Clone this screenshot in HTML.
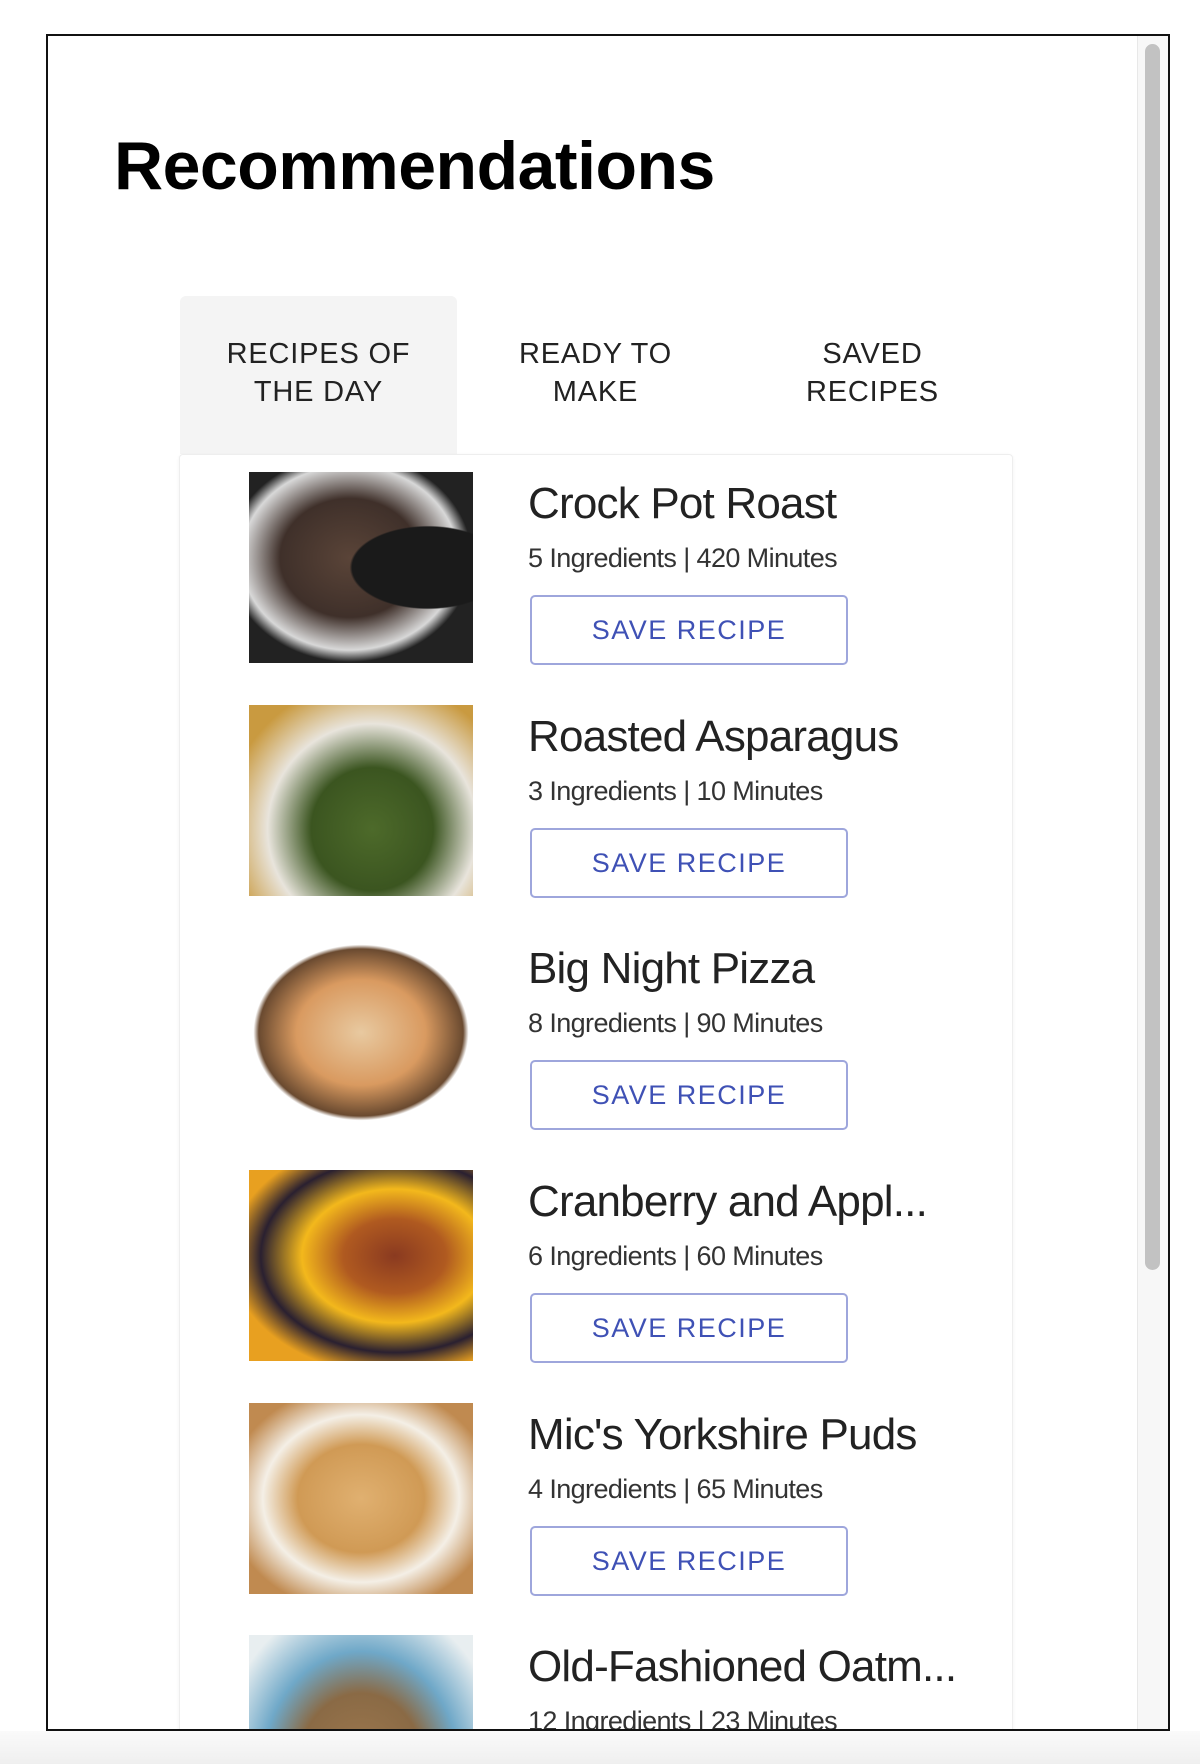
<!DOCTYPE html>
<html><head><meta charset="utf-8"><style>
html,body{margin:0;padding:0;width:1200px;height:1764px;background:#fff;overflow:hidden;font-family:"Liberation Sans",sans-serif}
.bottom{position:absolute;left:0;top:1731px;width:1200px;height:33px;background:linear-gradient(#fafafa,#efefef)}
.frame{position:absolute;left:46px;top:34px;width:1120px;height:1693px;border:2px solid #111;overflow:hidden;background:#fff}
.sb{position:absolute;right:0;top:0;width:30px;height:100%;background:#f7f7f7;border-left:1px solid #e8e8e8}
.thumb{position:absolute;left:7px;top:8px;width:15px;height:1226px;background:#c2c2c2;border-radius:8px}
h1{position:absolute;left:66px;top:91px;margin:0;font-size:68px;font-weight:bold;letter-spacing:-0.5px;color:#000}
.tab{position:absolute;top:258px;width:277px;height:158px;display:flex;align-items:center;justify-content:center;text-align:center;font-size:29px;line-height:38px;letter-spacing:0.8px;color:#222}
.tab.a{background:#f4f4f4;border-radius:6px 6px 0 0}
.card{position:absolute;left:131px;top:418px;width:832px;height:1300px;border:1px solid #eee;border-radius:4px;box-shadow:0 1px 3px rgba(0,0,0,.06)}
.row{position:absolute;left:0;width:900px;height:233px}
.img{position:absolute;left:69px;top:0;width:224px;height:191px}
.t{position:absolute;left:348px;top:7px;font-size:44px;color:#222;letter-spacing:-0.8px;white-space:nowrap}
.m{position:absolute;left:348px;top:71px;font-size:27px;color:#333;letter-spacing:-0.6px;white-space:nowrap}
.b{position:absolute;left:350px;top:123px;width:318px;height:70px;border:2px solid #9ea6dc;border-radius:5px;box-sizing:border-box;display:flex;align-items:center;justify-content:center;color:#3f51b5;font-size:27px;letter-spacing:1.5px}
</style></head><body>
<div class="frame">
<div class="sb"><div class="thumb"></div></div>
<h1>Recommendations</h1>
<div class="tab a" style="left:132px;top:260px;align-items:center"><span style="position:relative;top:-2px">RECIPES OF<br>THE DAY</span></div>
<div class="tab" style="left:409px">READY TO<br>MAKE</div>
<div class="tab" style="left:686px">SAVED<br>RECIPES</div>
<div class="card">
<div class="row" style="top:17px"><div class="img" style="background:radial-gradient(ellipse at 80% 50%,#1a1a1a 30%,transparent 31%),radial-gradient(ellipse at 45% 45%,#5a4438 0,#3f302a 40%,#d8d8d8 62%,#222 70%);"></div><div class="t">Crock Pot Roast</div><div class="m">5 Ingredients | 420 Minutes</div><div class="b">SAVE RECIPE</div></div>
<div class="row" style="top:250px"><div class="img" style="background:radial-gradient(ellipse at 55% 65%,#4d6a2a 0,#3b5520 35%,#e8e4dc 60%,#c99a40 85%)"></div><div class="t">Roasted Asparagus</div><div class="m">3 Ingredients | 10 Minutes</div><div class="b">SAVE RECIPE</div></div>
<div class="row" style="top:482px"><div class="img" style="background:radial-gradient(ellipse 48% 46% at 50% 50%,#e8c9a0 0,#d99a60 60%,#6a4a30 95%,#fff 100%)"></div><div class="t">Big Night Pizza</div><div class="m">8 Ingredients | 90 Minutes</div><div class="b">SAVE RECIPE</div></div>
<div class="row" style="top:715px"><div class="img" style="background:radial-gradient(ellipse at 65% 45%,#8a3a20 0,#b05a20 25%,#f3b81c 45%,#2a2030 65%,#e8a020 80%)"></div><div class="t">Cranberry and Appl...</div><div class="m">6 Ingredients | 60 Minutes</div><div class="b">SAVE RECIPE</div></div>
<div class="row" style="top:948px"><div class="img" style="background:radial-gradient(ellipse at 50% 50%,#e0b070 0,#d09a55 40%,#f4efe6 62%,#c08a50 85%)"></div><div class="t">Mic's Yorkshire Puds</div><div class="m">4 Ingredients | 65 Minutes</div><div class="b">SAVE RECIPE</div></div>
<div class="row" style="top:1180px"><div class="img" style="background:radial-gradient(ellipse at 50% 70%,#a07a50 0,#8a6a45 40%,#6fa8c8 62%,#e8eef0 90%)"></div><div class="t">Old-Fashioned Oatm...</div><div class="m">12 Ingredients | 23 Minutes</div></div>
</div>
</div>
<div class="bottom"></div>
</body></html>
